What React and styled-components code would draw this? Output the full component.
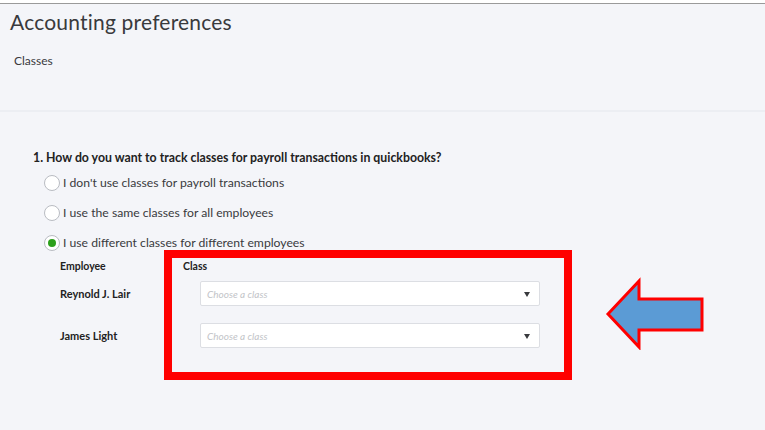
import React from 'react'
import styled, { createGlobalStyle } from 'styled-components'

const GlobalStyle = createGlobalStyle`
  html, body {
    margin: 0;
    padding: 0;
    background: #f4f5f9;
  }
  body {
    font-family: Lato, "Open Sans", sans-serif;
    color: #393a3d;
  }
`

const Page = styled.div`
  position: relative;
  width: 765px;
  height: 430px;
  overflow: hidden;
  box-sizing: border-box;
  background: #f4f5f9;
  border-top: 3px solid #ffffff;
`

const TopRule = styled.div`
  height: 1px;
  background: #9a9a9a;
`

const Header = styled.header`
  box-sizing: border-box;
  height: 108px;
  padding: 4px 10px 0;
  border-bottom: 2px solid #eceef3;
`

const Title = styled.h1`
  margin: 0;
  font-size: 21px;
  font-weight: 400;
  line-height: 28px;
  color: #393a3d;
  letter-spacing: 0.2px;
`

const Subtitle = styled.div`
  margin-top: 17px;
  padding-left: 4px;
  font-size: 12px;
  color: #393a3d;
`

const Body = styled.section`
  padding: 38px 0 0 33px;
`

const Question = styled.div`
  font-size: 12.3px;
  font-weight: 700;
  color: #222;
  line-height: 16px;
`

const Options = styled.div`
  display: flex;
  flex-direction: column;
  gap: 14px;
  margin-top: 9px;
  padding-left: 11px;
`

const Option = styled.label`
  display: flex;
  align-items: center;
  gap: 3px;
  font-size: 12.2px;
  line-height: 16px;
  color: #393a3d;
`

const Radio = styled.span`
  box-sizing: border-box;
  width: 16px;
  height: 16px;
  border-radius: 50%;
  border: 1px solid #b9bcc2;
  background: #fff;
  display: flex;
  align-items: center;
  justify-content: center;
  &::after {
    content: '';
    width: 8px;
    height: 8px;
    border-radius: 50%;
    background: ${p => (p.$checked ? '#2ca01c' : 'transparent')};
  }
`

const Table = styled.div`
  margin-top: 8px;
  padding-left: 27px;
`

const HeadRow = styled.div`
  display: flex;
  font-size: 10.5px;
  font-weight: 700;
  color: #222;
  line-height: 14px;
`

const HeadCell = styled.div`
  width: ${p => p.$w || 'auto'};
`

const Rows = styled.div`
  display: flex;
  flex-direction: column;
  gap: 17px;
  margin-top: 8px;
`

const Row = styled.div`
  display: flex;
  align-items: center;
`

const Name = styled.div`
  width: 140px;
  font-size: 11px;
  font-weight: 700;
  color: #222;
`

const Select = styled.div`
  box-sizing: border-box;
  width: 340px;
  height: 25px;
  display: flex;
  align-items: center;
  justify-content: space-between;
  padding: 0 9px 0 6px;
  background: #fff;
  border: 1px solid #dcdee3;
  border-radius: 2px;
`

const Placeholder = styled.span`
  font-size: 10px;
  font-style: italic;
  color: #c2c4c8;
`

const Caret = styled.span`
  width: 0;
  height: 0;
  border-left: 3.5px solid transparent;
  border-right: 3.5px solid transparent;
  border-top: 5px solid #393a3d;
  margin-top: 2px;
`

const Highlight = styled.div`
  position: absolute;
  left: 164px;
  top: 247px;
  width: 408px;
  height: 130px;
  box-sizing: border-box;
  border: 8px solid #ff0000;
  pointer-events: none;
`

const Arrow = styled.svg`
  position: absolute;
  left: 605px;
  top: 273px;
`

const employees = ['Reynold J. Lair', 'James Light']

const options = [
  { label: "I don't use classes for payroll transactions", checked: false },
  { label: 'I use the same classes for all employees', checked: false },
  { label: 'I use different classes for different employees', checked: true },
]

export default function App() {
  return (
    <Page>
      <GlobalStyle />
      <TopRule />
      <Header>
        <Title>Accounting preferences</Title>
        <Subtitle>Classes</Subtitle>
      </Header>
      <Body>
        <Question>1. How do you want to track classes for payroll transactions in quickbooks?</Question>
        <Options>
          {options.map(o => (
            <Option key={o.label}>
              <Radio $checked={o.checked} />
              {o.label}
            </Option>
          ))}
        </Options>
        <Table>
          <HeadRow>
            <HeadCell $w="123px">Employee</HeadCell>
            <HeadCell>Class</HeadCell>
          </HeadRow>
          <Rows>
            {employees.map(e => (
              <Row key={e}>
                <Name>{e}</Name>
                <Select>
                  <Placeholder>Choose a class</Placeholder>
                  <Caret />
                </Select>
              </Row>
            ))}
          </Rows>
        </Table>
      </Body>
      <Highlight />
      <Arrow width="102" height="74" viewBox="0 0 102 74">
        <polygon
          points="3,38 34,5 34,23 97,23 97,54 34,54 34,71"
          fill="#5b9bd5"
          stroke="#ff0000"
          strokeWidth="3"
        />
      </Arrow>
    </Page>
  )
}
